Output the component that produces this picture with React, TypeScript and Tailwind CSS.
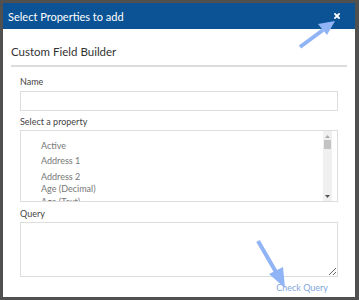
import React from "react";

const options = ["Active", "Address 1", "Address 2", "Age (Decimal)", "Age (Text)"];

export default function App() {
  return (
    <div
      className="relative w-[359px] h-[300px] bg-[#505050] pl-[3px] pt-[3px] pr-[4px] pb-[3px] overflow-hidden"
      style={{ fontFamily: "Lato, 'Open Sans', sans-serif" }}
    >
      <div className="flex flex-col h-full bg-white">
        <div className="h-[26px] bg-[#0b5394] flex items-center justify-between pl-[5px] pr-[15px]">
          <span className="text-white text-[11px] leading-none">Select Properties to add</span>
          <svg width="6" height="6" viewBox="0 0 6 6">
            <path d="M1 1 L5 5 M5 1 L1 5" stroke="#fff" strokeWidth="1.8" strokeLinecap="square" />
          </svg>
        </div>
        <div className="px-[8px]">
          <div className="pt-[16px] pb-[6px] text-[11.5px] leading-[14px] text-[#333]">Custom Field Builder</div>
          <div className="h-[2px] bg-[#dcdcdc]" />
          <div className="px-[9px]">
            <div className="mt-[9px] text-[9px] leading-[11px] text-[#444]">Name</div>
            <div className="mt-[4px] h-[20px] border border-[#ddd]" />
            <div className="mt-[5px] text-[9px] leading-[11px] text-[#444]">Select a property</div>
            <div className="mt-[3px] h-[72px] border border-[#ddd] flex overflow-hidden">
              <div className="flex-1 pl-[20px] pt-[9px] text-[9px] text-[#777] leading-[11px]">
                <div>{options[0]}</div>
                <div className="mt-[4px]">{options[1]}</div>
                <div className="mt-[5px]">{options[2]}</div>
                <div className="mt-[1px]">{options[3]}</div>
                <div className="mt-[2px]">{options[4]}</div>
              </div>
              <div className="w-[9px] mr-[5px] bg-[#f0f0f0] flex flex-col items-center">
                <svg className="mt-[4px]" width="5" height="3" viewBox="0 0 5 3">
                  <path d="M0 3 L2.5 0 L5 3 Z" fill="#aaa" />
                </svg>
                <div className="mt-[2px] w-[7px] h-[9px] bg-[#c3c3c3]" />
                <div className="flex-1" />
                <svg className="mb-[3px]" width="5" height="3" viewBox="0 0 5 3">
                  <path d="M0 0 L5 0 L2.5 3 Z" fill="#555" />
                </svg>
              </div>
            </div>
            <div className="mt-[6px] text-[9px] leading-[11px] text-[#444]">Query</div>
            <textarea className="mt-[3px] block w-full h-[55px] border border-[#ddd] outline-none resize" />
            <div className="mt-[5px] flex justify-end pr-[10px]">
              <span className="text-[9px] leading-[11px] text-[#7fa6dc]">Check Query</span>
            </div>
          </div>
        </div>
      </div>
      <svg className="absolute left-0 top-0 pointer-events-none" width="359" height="300" viewBox="0 0 359 300">
        <line x1="300" y1="47" x2="323" y2="30" stroke="#91b4f6" strokeWidth="4" />
        <path d="M335 21 L318 24 L327 35 Z" fill="#91b4f6" />
        <line x1="258" y1="241" x2="276" y2="272" stroke="#91b4f6" strokeWidth="4" />
        <path d="M285 288 L269 274 L283 267 Z" fill="#91b4f6" />
      </svg>
    </div>
  );
}
